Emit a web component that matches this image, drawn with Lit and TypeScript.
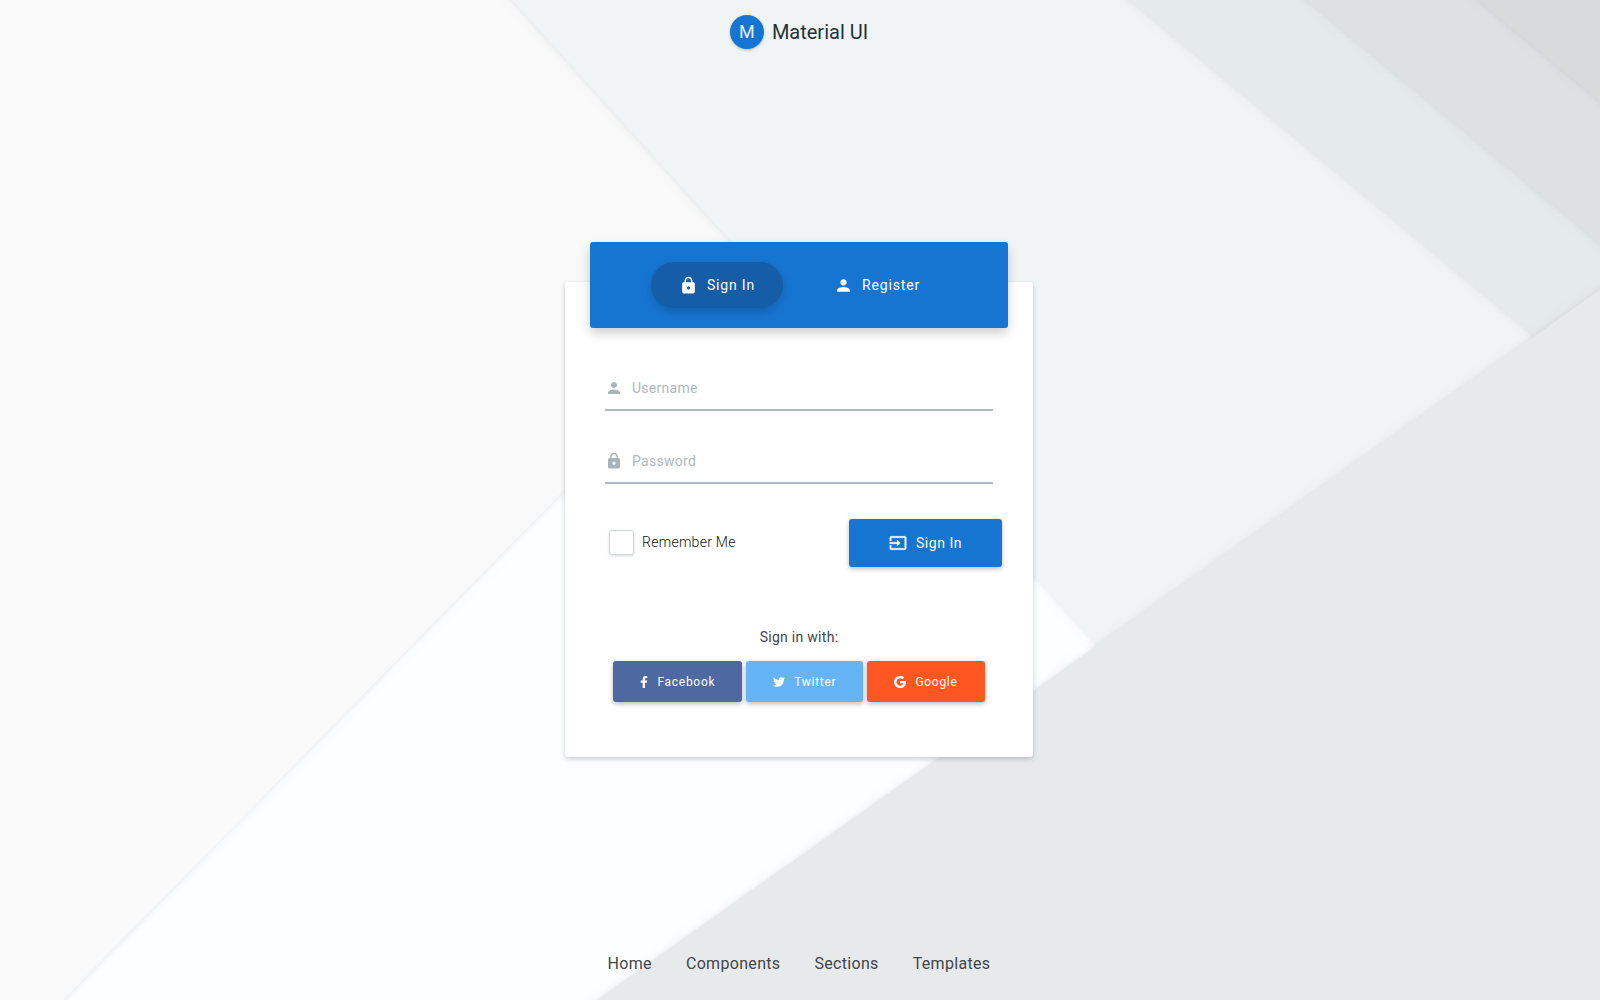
import { LitElement, html, css, svg } from "lit";
import { customElement } from "lit/decorators.js";

const LOCK = "M18 8h-1V6c0-2.760-2.240-5-5-5S7 3.240 7 6v2H6c-1.100 0-2 .9-2 2v10c0 1.100.9 2 2 2h12c1.100 0 2-.9 2-2V10c0-1.100-.9-2-2-2zm-6 9c-1.100 0-2-.9-2-2s.9-2 2-2 2 .9 2 2-.9 2-2 2zm3.100-9H8.900V6c0-1.710 1.390-3.100 3.100-3.100s3.100 1.390 3.100 3.100v2z";
const PERSON = "M12 12c2.210 0 4-1.790 4-4s-1.790-4-4-4-4 1.790-4 4 1.790 4 4 4zm0 2c-2.670 0-8 1.340-8 4v2h16v-2c0-2.660-5.330-4-8-4z";
const INPUT = "M21 3.010H3c-1.100 0-2 .9-2 2V9h2V4.990h18v14.030H3V15H1v4.010c0 1.100.9 1.980 2 1.980h18c1.100 0 2-.88 2-1.980v-14c0-1.110-.9-2-2-2zM11 16l4-4-4-4v3H1v2h10v3z";

const icon = (d: string, cls = "icon", box = "0 0 24 24") =>
  html`<svg class=${cls} viewBox=${box} aria-hidden="true"><path d=${d} /></svg>`;

const FACEBOOK = "M279.140 288l14.220-92.660h-88.910v-60.130c0-25.350 12.420-50.060 52.240-50.060h40.420V6.260S260.430 0 225.360 0c-73.220 0-121.080 44.380-121.080 124.720v70.620H22.890V288h81.390v224h100.170V288z";
const TWITTER = "M459.370 151.716c.325 4.548.325 9.097.325 13.645 0 138.720-105.583 298.558-298.558 298.558-59.452 0-114.680-17.219-161.137-47.106 8.447.974 16.568 1.299 25.340 1.299 49.055 0 94.213-16.568 130.274-44.832-46.132-.975-84.792-31.188-98.112-72.772 6.498.974 12.995 1.624 19.818 1.624 9.421 0 18.843-1.300 27.614-3.573-48.081-9.747-84.143-51.980-84.143-102.985v-1.299c13.969 7.797 30.214 12.670 47.431 13.319-28.264-18.843-46.781-51.005-46.781-87.391 0-19.492 5.197-37.360 14.294-52.954 51.655 63.675 129.300 105.258 216.365 109.807-1.624-7.797-2.599-15.918-2.599-24.040 0-57.828 46.782-104.934 104.934-104.934 30.213 0 57.502 12.670 76.670 33.137 23.715-4.548 46.456-13.320 66.599-25.340-7.798 24.366-24.366 44.833-46.132 57.827 21.117-2.273 41.584-8.122 60.426-16.243-14.292 20.791-32.161 39.308-52.628 54.253z";
const GOOGLE = "M12.200 10.300v3.900h5.500c-.6 2.300-2.500 3.900-5.500 3.900a6.100 6.100 0 1 1 4-10.700l2.900-2.900A10.200 10.200 0 1 0 12.200 22.200c6 0 10-4.200 10-10.100 0-.7-.1-1.200-.2-1.800z";

const backdrop = svg`
  <defs>
    <filter id="soft" x="-10%" y="-10%" width="120%" height="120%" color-interpolation-filters="sRGB">
      <feDropShadow dx="0" dy="0" stdDeviation="6" flood-color="#66788a" flood-opacity=".09" />
      <feDropShadow dx="0" dy="0" stdDeviation="2" flood-color="#777777" flood-opacity=".1" />
    </filter>
  </defs>
  <rect width="1600" height="1000" fill="#fdfeff" />
  <g filter="url(#soft)"><path fill="#f9f9f9" d="M-100-100H900V151L767 284 63 1000l-98 100H-100z" /></g>
  <g filter="url(#soft)"><path fill="#f0f4f5" d="M421-100 512 0l585 645 100 100 600-500V-100z" /></g>
  <g filter="url(#soft)"><path fill="#e5eaea" d="M1009-100 1130 0l406 337 100 83h200V-100z" /></g>
  <g filter="url(#soft)"><path fill="#dee1e4" d="M1187-100 1307 0l293 243 120 100V-100z" /></g>
  <g filter="url(#soft)"><path fill="#d8dbdc" d="M1357-100 1478 0l122 101 120 98V-100z" /></g>
  <g filter="url(#soft)"><path fill="#e6eaeb" d="M1741 190 1095 647 594 1002 450 1104h1300z" /></g>
`;

@customElement("app-root")
export class AppRoot extends LitElement {
  static styles = css`
    :host { display: block; font-family: Roboto, "Liberation Sans", sans-serif; color: #424548; }
    * { box-sizing: border-box; }
    button, input { font: inherit; }
    a { color: inherit; text-decoration: none; }
    .page { position: relative; min-height: 100vh; display: flex; flex-direction: column; align-items: center; justify-content: space-between; padding-right: 2px; overflow: hidden; }
    .backdrop { position: absolute; inset: 0; width: 100%; height: 100%; z-index: -1; }
    .brand { display: flex; align-items: center; gap: 8px; padding-top: 15px; font-size: 20px; line-height: 34px; color: #263238; }
    .logo { width: 34px; height: 34px; border-radius: 50%; background: #1775d2; color: #e3eefa; font-size: 18px; text-align: center; box-shadow: 0 1px 3px rgba(0, 0, 0, .25); }
    .card { width: 100%; max-width: 468px; display: flex; flex-direction: column; padding: 0 25px 55px; background: #fff; border-radius: 3px; box-shadow: 0 2px 5px rgba(0, 0, 0, .2); margin-top: 38px; }
    .tabs { display: flex; align-items: center; justify-content: center; gap: 28px; height: 86px; margin-top: -40px; padding-right: 4px; background: #1775d2; border-radius: 3px; box-shadow: 0 5px 11px rgba(0, 0, 0, .2); }
    .tab { display: flex; align-items: center; justify-content: center; gap: 9px; height: 46px; width: 132px; padding: 0; border: 0; border-radius: 23px; background: none; color: #fff; font-size: 14px; letter-spacing: .06em; cursor: pointer; }
    .tab.active { background: #165da7; box-shadow: 0 4px 10px rgba(0, 0, 0, .18); }
    .icon { width: 18px; height: 18px; fill: currentColor; flex: none; }
    .tab .icon { width: 19px; height: 19px; }
    .submit .icon { stroke: currentColor; stroke-width: .5; }
    .form { display: flex; flex-direction: column; padding: 38px 15px 0; }
    .field { display: flex; align-items: center; gap: 9px; height: 45px; margin-bottom: 28px; border-bottom: 2px solid #aebbbf; color: #aab4b8; }
    .field input { flex: 1; min-width: 0; height: 42px; padding: 0; border: 0; outline: 0; background: none; color: #3c3f42; font-size: 14px; letter-spacing: .02em; }
    .field input::placeholder { color: #b0b9bd; opacity: 1; }
    .actions { display: flex; align-items: center; justify-content: space-between; margin: 7px -9px 0 4px; }
    .remember { display: flex; align-items: center; gap: 8px; padding-bottom: 2px; font-size: 14px; font-weight: 300; line-height: 24px; letter-spacing: .02em; color: #111; }
    .check { appearance: none; width: 25px; height: 25px; margin: 0; border: 1px solid #cfd8dc; border-radius: 3px; background: #fff; box-shadow: 0 1px 3px rgba(0, 0, 0, .15); }
    .check:checked { background: #1775d2; }
    .submit { display: flex; align-items: center; justify-content: center; gap: 9px; width: 153px; height: 48px; padding: 0; border: 0; border-radius: 3px; background: #1775d2; color: #fff; font-size: 14px; letter-spacing: .04em; box-shadow: 0 2px 5px rgba(0, 0, 0, .26); cursor: pointer; }
    .with { margin: 58px 0 12px; font-size: 14px; line-height: 24px; letter-spacing: .02em; text-align: center; }
    .socials { display: flex; justify-content: center; gap: 4px; }
    .social { display: flex; align-items: center; justify-content: center; gap: 9px; height: 41px; padding: 0 27px; border: 0; border-radius: 3px; color: #fff; font-size: 12px; letter-spacing: .06em; box-shadow: 0 2px 5px rgba(0, 0, 0, .26); cursor: pointer; }
    .facebook { background: #4e69a2; }
    .twitter { background: #65b5f6; }
    .google { background: #ff5722; }
    .mini { width: 12px; height: 12px; fill: currentColor; flex: none; }
    .narrow { width: 8px; }
    .links { display: flex; gap: 34px; padding-bottom: 24px; font-size: 16px; line-height: 24px; letter-spacing: .02em; }
  `;

  render() {
    return html`
      <div class="page">
        <svg class="backdrop" viewBox="0 0 1600 1000" preserveAspectRatio="none" aria-hidden="true">${backdrop}</svg>
        <header><a class="brand" href="#"><span class="logo">M</span>Material UI</a></header>
        <main class="card">
          <nav class="tabs">
            <button class="tab active" type="button">${icon(LOCK)}Sign In</button>
            <button class="tab" type="button">${icon(PERSON)}Register</button>
          </nav>
          <form class="form">
            <label class="field">${icon(PERSON)}<input type="text" placeholder="Username" aria-label="Username" /></label>
            <label class="field">${icon(LOCK)}<input type="password" placeholder="Password" aria-label="Password" /></label>
            <div class="actions">
              <label class="remember"><input class="check" type="checkbox" />Remember Me</label>
              <button class="submit" type="button">${icon(INPUT)}Sign In</button>
            </div>
            <p class="with">Sign in with:</p>
            <div class="socials">
              <button class="social facebook" type="button">${icon(FACEBOOK, "mini narrow", "0 0 320 512")}Facebook</button>
              <button class="social twitter" type="button">${icon(TWITTER, "mini", "0 0 512 512")}Twitter</button>
              <button class="social google" type="button">${icon(GOOGLE, "mini", "2 2 20 20")}Google</button>
            </div>
          </form>
        </main>
        <footer><nav class="links">
          <a href="#">Home</a><a href="#">Components</a><a href="#">Sections</a><a href="#">Templates</a>
        </nav></footer>
      </div>
    `;
  }
}
